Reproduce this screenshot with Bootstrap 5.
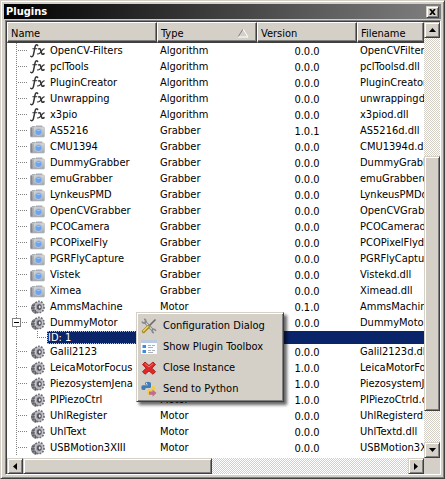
<!DOCTYPE html>
<html lang="en">
<head>
<meta charset="utf-8">
<meta name="viewport" content="width=device-width, initial-scale=1">
<title>Plugins</title>
<link href="https://cdn.jsdelivr.net/npm/bootstrap@5.3.0/dist/css/bootstrap.min.css" rel="stylesheet">
<style>
:root{--face:#d4d0c8;--dark:#404040;--mid:#808080;--navy:#0a246a}
body{font-family:"DejaVu Sans Condensed","Noto Sans",sans-serif;font-size:11px;line-height:16px;color:#000;background:var(--face)}
.dock{background:var(--face);border:1px solid;border-color:var(--face) var(--dark) var(--dark) var(--face);box-shadow:inset 1px 1px #fff,inset -1px -1px var(--mid);padding:3px}
.titlebar{height:15px;background:linear-gradient(90deg,#000,#808080);color:#fff;line-height:15px;padding:0 2px}
.titlebar h1{font-size:11px;line-height:15px}
.raised{background:var(--face);border:1px solid;border-color:var(--face) var(--dark) var(--dark) var(--face);box-shadow:inset 1px 1px #fff,inset -1px -1px var(--mid)}
.close-btn{width:13px;height:12px;padding:0}
.frame{border:1px solid;border-color:var(--mid) #fff #fff var(--mid);box-shadow:inset 1px 1px var(--dark);padding:1px 0 0 1px;margin:1px 0 0 1px;background:#fff}
.tree{table-layout:fixed;width:100%;border-collapse:separate;border-spacing:0}
.tree th{height:21px;padding:2px 3px 0;font-weight:400;background:var(--face);border:solid;border-width:1px 1px 2px 1px;border-color:#fff var(--dark) var(--dark) #fff;box-shadow:inset -1px -1px var(--mid);line-height:15px}
.tree td{height:16px;padding:0 2px 0 3px;line-height:15px;vertical-align:top;white-space:nowrap;overflow:hidden}
.tree td.ver{padding:1px 0 0;text-align:center}
.tree tbody td:first-child{padding:0 0 0 23px;background:repeating-linear-gradient(180deg,#808080 0 1px,#fff 1px 2px) 9px 0/1px 100% no-repeat,repeating-linear-gradient(90deg,#808080 0 1px,#fff 1px 2px) 11px 7px/9px 1px no-repeat #fff}
.tree .row-ico{width:16px;height:16px;display:block;flex:none}
.name-cell{display:flex;gap:4px;position:relative;height:16px}
.expander{position:absolute;left:-18px;top:3px;width:9px;height:9px;padding:0;border:1px solid var(--mid);background:linear-gradient(#000,#000) 1px 3px/5px 1px no-repeat #fff}
.tree tr.picked td{height:13px;line-height:13px;background:var(--navy);color:#fff;padding:0}
.tree tr.picked td:first-child{padding-left:30px;background:repeating-linear-gradient(180deg,#808080 0 1px,#fff 1px 2px) 9px 0/1px 100% no-repeat,repeating-linear-gradient(180deg,#808080 0 1px,#fff 1px 2px) 30px 0/1px 7px no-repeat,repeating-linear-gradient(90deg,#808080 0 1px,#fff 1px 2px) 30px 6px/10px 1px no-repeat #fff}
.picked-label{background:var(--navy);margin-left:10px;padding-left:1px;height:13px;outline:1px dotted #d8c080;outline-offset:-1px}
.view{min-height:0;min-width:0}
.track{background:repeating-conic-gradient(#fff 0 25%,var(--face) 0 50%) 0 0/2px 2px}
.sb-btn{width:16px;height:16px;padding:0;flex:none;display:flex;align-items:center;justify-content:center}
.vthumb{position:absolute;left:0;right:0}
.vbar{width:16px;flex:none}
.hbar{height:16px;flex:none}
.hthumb{width:49%}
.corner{width:16px;background:var(--face)}
.popup.dropdown-menu{left:135px;top:311px;min-width:148px;padding:2px;border-radius:0;font-size:11px;color:#000;background:var(--face);border:1px solid;border-color:var(--face) var(--dark) var(--dark) var(--face);box-shadow:inset 1px 1px #fff,inset -1px -1px var(--mid),3px 3px 3px #0009}
.popup .dropdown-item{display:flex;align-items:center;gap:6px;height:21px;padding:0 2px;color:#000;line-height:16px}
.popup svg{width:16px;height:16px}
</style>
<script src="https://cdn.jsdelivr.net/npm/bootstrap@5.3.0/dist/js/bootstrap.bundle.min.js"></script>
</head>
<body>
<svg width="0" height="0" class="position-absolute" aria-hidden="true">
<defs>
<linearGradient id="metal" x2="0" y2="1"><stop stop-color="#d8dadd"/><stop offset="1" stop-color="#a2a6ab"/></linearGradient>
<symbol id="fx" viewBox="0 0 16 16"><g fill="none" stroke="#333" stroke-linecap="round"><path stroke-width="1.5" d="M7.6 2.4C6.2 1 5.4 2.2 5 4.2L3.5 11.4C3.1 13.4 2 14.4.8 13.3"/><path d="M2.8 5.7h4"/><path stroke-width="1.6" d="M8.700 5.9c1.7-.8 2 1 2.4 2.8.4 2 .9 3.200 2.900 2"/><path stroke-width="1.1" d="M14.200 5.9C12.4 5.4 10.300 11.8 7.500 10.9"/></g></symbol>
<symbol id="cam" viewBox="0 0 16 16"><path fill="#a9acaf" d="M2 3h3v2H2zM6 2.500h6l1 2H5z"/><rect x=".5" y="4" width="14" height="10" rx="1" fill="url(#metal)" stroke="#b4b7ba" stroke-width=".6"/><path fill="#85898e" d="M.5 4.500h2v9h-2z"/><path fill="#b0b3b6" d="M3 4.500h1v9H3z"/><circle cx="8.500" cy="9" r="4" fill="#bcc2cb"/><circle cx="8.500" cy="9" r="3" fill="#6ea3ec"/><path fill="#9ac4fa" d="M6.500 8a2.200 2.200 0 0 1 4 0z"/></symbol>
<symbol id="gear" viewBox="0 0 16 16"><ellipse cx="6" cy="9" rx="5" ry="5.500" fill="#8a8a90"/><ellipse cx="9" cy="8" rx="5" ry="5.500" fill="#b4b4bc" stroke="#6e6e76" stroke-width="1.800" stroke-dasharray="1.700 1.200"/><ellipse cx="9" cy="8" rx="3.600" ry="4.200" fill="#a4a4ad" stroke="#d4d4da" stroke-width=".7"/><ellipse cx="9.300" cy="8" rx="2.200" ry="2.700" fill="#4a4a52"/><ellipse cx="9.700" cy="8" rx="1" ry="1.400" fill="#e8e8ee"/><path stroke="#5c5c64" stroke-width="1.300" d="M2 6l2 1M1 9h2.500M2 12l2-1M5 14.500L6 12"/></symbol>
</defs>
</svg>
<main class="dock d-flex flex-column vh-100 overflow-hidden position-relative">
<header class="titlebar d-flex align-items-center justify-content-between"><h1 class="m-0 fw-bold">Plugins</h1><button type="button" class="raised close-btn d-flex align-items-center justify-content-center" aria-label="Close"><svg width="7" height="6" viewBox="0 0 7 6"><path d="M1 0l5 6M6 0L1 6" stroke="#000" stroke-width="1.700"/></svg></button></header>
<section class="frame flex-grow-1 d-flex flex-column view">
<div class="d-flex flex-grow-1 view">
<div class="flex-grow-1 overflow-hidden view">
<table class="tree">
<colgroup><col style="width:150px"><col style="width:100px"><col style="width:100px"><col></colgroup>
<thead><tr><th>Name</th><th><span class="d-flex justify-content-between align-items-center">Type<svg width="12" height="10" viewBox="0 0 12 10" class="me-1"><path d="M1 9L6 1" stroke="#808080" fill="none"/><path d="M6 1l5 8H1" stroke="#fff" fill="none"/></svg></span></th><th>Version</th><th>Filename</th></tr></thead>
<tbody>
<tr><td><div class="name-cell"><svg class="row-ico"><use href="#fx"/></svg>OpenCV-Filters</div></td><td>Algorithm</td><td class="ver">0.0.0</td><td>OpenCVFiltersd.dll</td></tr>
<tr><td><div class="name-cell"><svg class="row-ico"><use href="#fx"/></svg>pclTools</div></td><td>Algorithm</td><td class="ver">0.0.0</td><td>pclToolsd.dll</td></tr>
<tr><td><div class="name-cell"><svg class="row-ico"><use href="#fx"/></svg>PluginCreator</div></td><td>Algorithm</td><td class="ver">0.0.0</td><td>PluginCreatord.dll</td></tr>
<tr><td><div class="name-cell"><svg class="row-ico"><use href="#fx"/></svg>Unwrapping</div></td><td>Algorithm</td><td class="ver">0.0.0</td><td>unwrappingd.dll</td></tr>
<tr><td><div class="name-cell"><svg class="row-ico"><use href="#fx"/></svg>x3pio</div></td><td>Algorithm</td><td class="ver">0.0.0</td><td>x3piod.dll</td></tr>
<tr><td><div class="name-cell"><svg class="row-ico"><use href="#cam"/></svg>AS5216</div></td><td>Grabber</td><td class="ver">1.0.1</td><td>AS5216d.dll</td></tr>
<tr><td><div class="name-cell"><svg class="row-ico"><use href="#cam"/></svg>CMU1394</div></td><td>Grabber</td><td class="ver">0.0.0</td><td>CMU1394d.dll</td></tr>
<tr><td><div class="name-cell"><svg class="row-ico"><use href="#cam"/></svg>DummyGrabber</div></td><td>Grabber</td><td class="ver">0.0.0</td><td>DummyGrabberd.dll</td></tr>
<tr><td><div class="name-cell"><svg class="row-ico"><use href="#cam"/></svg>emuGrabber</div></td><td>Grabber</td><td class="ver">0.0.0</td><td>emuGrabberd.dll</td></tr>
<tr><td><div class="name-cell"><svg class="row-ico"><use href="#cam"/></svg>LynkeusPMD</div></td><td>Grabber</td><td class="ver">0.0.0</td><td>LynkeusPMDd.dll</td></tr>
<tr><td><div class="name-cell"><svg class="row-ico"><use href="#cam"/></svg>OpenCVGrabber</div></td><td>Grabber</td><td class="ver">0.0.0</td><td>OpenCVGrabberd.dll</td></tr>
<tr><td><div class="name-cell"><svg class="row-ico"><use href="#cam"/></svg>PCOCamera</div></td><td>Grabber</td><td class="ver">0.0.0</td><td>PCOCamerad.dll</td></tr>
<tr><td><div class="name-cell"><svg class="row-ico"><use href="#cam"/></svg>PCOPixelFly</div></td><td>Grabber</td><td class="ver">0.0.0</td><td>PCOPixelFlyd.dll</td></tr>
<tr><td><div class="name-cell"><svg class="row-ico"><use href="#cam"/></svg>PGRFlyCapture</div></td><td>Grabber</td><td class="ver">0.0.0</td><td>PGRFlyCaptured.dll</td></tr>
<tr><td><div class="name-cell"><svg class="row-ico"><use href="#cam"/></svg>Vistek</div></td><td>Grabber</td><td class="ver">0.0.0</td><td>Vistekd.dll</td></tr>
<tr><td><div class="name-cell"><svg class="row-ico"><use href="#cam"/></svg>Ximea</div></td><td>Grabber</td><td class="ver">0.0.0</td><td>Ximead.dll</td></tr>
<tr><td><div class="name-cell"><svg class="row-ico"><use href="#gear"/></svg>AmmsMachine</div></td><td>Motor</td><td class="ver">0.1.0</td><td>AmmsMachined.dll</td></tr>
<tr><td><div class="name-cell"><button type="button" class="expander" aria-label="Collapse DummyMotor"></button><svg class="row-ico"><use href="#gear"/></svg>DummyMotor</div></td><td>Motor</td><td class="ver">0.0.0</td><td>DummyMotord.dll</td></tr>
<tr class="picked"><td><div class="picked-label">ID: 1</div></td><td></td><td></td><td></td></tr>
<tr><td><div class="name-cell"><svg class="row-ico"><use href="#gear"/></svg>Galil2123</div></td><td>Motor</td><td class="ver">0.0.0</td><td>Galil2123d.dll</td></tr>
<tr><td><div class="name-cell"><svg class="row-ico"><use href="#gear"/></svg>LeicaMotorFocus</div></td><td>Motor</td><td class="ver">1.0.0</td><td>LeicaMotorFocusd.dll</td></tr>
<tr><td><div class="name-cell"><svg class="row-ico"><use href="#gear"/></svg>PiezosystemJena</div></td><td>Motor</td><td class="ver">1.0.0</td><td>PiezosystemJenad.dll</td></tr>
<tr><td><div class="name-cell"><svg class="row-ico"><use href="#gear"/></svg>PIPiezoCtrl</div></td><td>Motor</td><td class="ver">1.0.0</td><td>PIPiezoCtrld.dll</td></tr>
<tr><td><div class="name-cell"><svg class="row-ico"><use href="#gear"/></svg>UhlRegister</div></td><td>Motor</td><td class="ver">0.0.0</td><td>UhlRegisterd.dll</td></tr>
<tr><td><div class="name-cell"><svg class="row-ico"><use href="#gear"/></svg>UhlText</div></td><td>Motor</td><td class="ver">0.0.0</td><td>UhlTextd.dll</td></tr>
<tr><td><div class="name-cell"><svg class="row-ico"><use href="#gear"/></svg>USBMotion3XIII</div></td><td>Motor</td><td class="ver">0.0.0</td><td>USBMotion3XIIId.dll</td></tr>
</tbody>
</table>
</div>
<div class="vbar d-flex flex-column">
<button type="button" class="raised sb-btn" aria-label="Scroll up"><svg width="7" height="4"><path d="M0 4l3.500-4L7 4z"/></svg></button>
<div class="track flex-grow-1 position-relative"><div class="raised vthumb" style="top:29.3%;height:63%"></div></div>
<button type="button" class="raised sb-btn" aria-label="Scroll down"><svg width="7" height="4"><path d="M0 0h7L3.500 4z"/></svg></button>
</div>
</div>
<div class="hbar d-flex">
<button type="button" class="raised sb-btn" aria-label="Scroll left"><svg width="4" height="7"><path d="M4 0v7L0 3.500z"/></svg></button>
<div class="track flex-grow-1 d-flex"><div class="raised hthumb"></div></div>
<button type="button" class="raised sb-btn" aria-label="Scroll right"><svg width="4" height="7"><path d="M0 0v7l4-3.500z"/></svg></button>
<div class="corner"></div>
</div>
</section>
<div class="popup dropdown-menu show" role="menu">
<button type="button" class="dropdown-item" role="menuitem"><svg viewBox="0 0 16 16"><path d="M3.500 3.500l8 8.500" stroke="#77797c" stroke-width="2.600"/><path d="M3.500 3.500l8 8.500" stroke="#d5d8da" stroke-width="1.200"/><path d="M1 3.500Q2 6 4.500 4.800 5.500 2 3.200 1" fill="none" stroke="#85888c" stroke-width="1.600"/><path d="M14.800 13Q14 10.500 11.500 11.500 10.500 14 12.800 15" fill="none" stroke="#85888c" stroke-width="1.600"/><path d="M14.500 1.500L8 8" stroke="#65686c" stroke-width="1.600"/><path d="M7.500 8.500L2.500 13.500" stroke="#a68a24" stroke-width="3.200" stroke-linecap="round"/><path d="M7 8.500L2.500 13" stroke="#ecd468" stroke-width="1.400" stroke-linecap="round"/></svg>Configuration Dialog</button>
<button type="button" class="dropdown-item" role="menuitem"><svg viewBox="0 0 16 16"><path fill="#fafcff" d="M0 1h16v14H0z"/><path fill="#b9c9df" d="M0 1h16v3H0z"/><path fill="#3d8be0" d="M1.500 6H5v3H1.500zM1.500 11H5v3H1.500z"/><path stroke="#aab0ba" d="M7 6.500h3M11 6.500h3M7 8.500h5M7 11.500h3M11 11.500h3M7 13.500h5"/></svg>Show Plugin Toolbox</button>
<button type="button" class="dropdown-item" role="menuitem"><svg viewBox="0 0 16 16"><path fill="#df2929" stroke="#a50d0d" stroke-width=".8" d="M4 2l4 3.500L12 2l2.500 2.500L11 8.200l3.500 3.500L12 14.300 8 11l-4 3.300-2.500-2.600L5 8.200 1.500 4.500z"/><path d="M3.800 3.500L8 7l4-3.500" fill="none" stroke="#f27770"/></svg>Close Instance</button>
<button type="button" class="dropdown-item" role="menuitem"><svg viewBox="0 0 16 16"><path fill="#3f7db8" d="M4 2.500Q4 .7 7 .7t3 2v3Q10 7 8.500 7H5.500Q4 7 4 9H2Q.3 9 .3 6.500T2 4.200h5v-.7H4z"/><path fill="#f2cd4c" d="M11 5h1.500q2 0 2 2.400T12.500 10H9v.6h3v1.600q0 1.500-3 1.500t-3-1.500V9.500Q6 8 7.500 8h2Q11 8 11 6.500z"/><circle cx="5.500" cy="2.300" r=".6" fill="#fff"/><path fill="#bd6c94" d="M8 10.500h3.500V8.500l4 3.500-4 3.700v-2H8z"/></svg>Send to Python</button>
</div>
</main>
</body>
</html>
